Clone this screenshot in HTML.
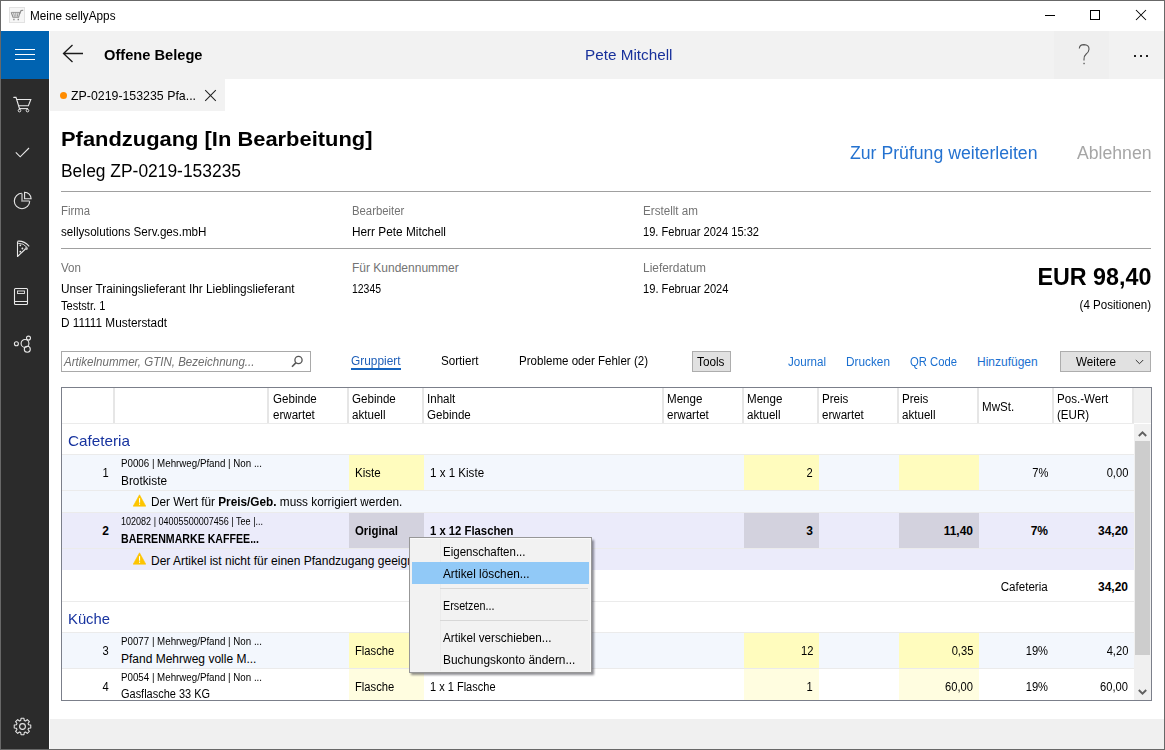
<!DOCTYPE html>
<html><head><meta charset="utf-8"><style>
html,body{margin:0;padding:0;width:1165px;height:750px;overflow:hidden;background:#fff;}
body{position:relative;font-family:"Liberation Sans",sans-serif;}
.a{position:absolute;display:block;}
.t{position:absolute;white-space:nowrap;}
</style></head><body>
<div class="a" style="left:0px;top:0px;width:1165px;height:750px;background:#fff;"></div>
<svg class="a" style="left:9px;top:7px;" width="16" height="16" viewBox="0 0 16 16"><rect x="0.5" y="0.5" width="15" height="15" fill="#f6f6f6" stroke="#e2e2e2"/><path d="M2.2 5.2 L4 10.3 L9.6 10.3 L11 5.2" fill="none" stroke="#8c8c8c" stroke-width="1.1"/><path d="M2.4 5.4 L11 5.4" stroke="#9a9a9a" stroke-width="1"/><path d="M4.6 5.5 L5.4 9.6 M6.8 5.5 L6.9 9.6 M9 5.5 L8.4 9.6" stroke="#8c8c8c" stroke-width="0.9"/><path d="M10.6 7 L12 3.6 L14.2 3.2" fill="none" stroke="#8c8c8c" stroke-width="1.1"/><path d="M4.2 12.5 L5.6 12.5 M8.6 12.5 L10 12.5" stroke="#8c8c8c" stroke-width="1.4"/></svg>
<div class="t" style="top:10px;font-size:12px;line-height:12px;color:#000;left:30px;transform:scaleX(0.9786);transform-origin:0 0;">Meine sellyApps</div>
<div class="a" style="left:1045px;top:15px;width:10px;height:1px;background:#000;"></div>
<div class="a" style="left:1090px;top:10px;width:10px;height:10px;border:1px solid #000;box-sizing:border-box;"></div>
<svg class="a" style="left:1135px;top:9px;" width="12" height="12" viewBox="0 0 12 12"><path d="M1 1 L11 11 M11 1 L1 11" stroke="#000" stroke-width="1.05"/></svg>
<div class="a" style="left:1px;top:31px;width:48px;height:718px;background:#2b2b2b;"></div>
<div class="a" style="left:1px;top:31px;width:48px;height:48px;background:#0063b1;"></div>
<div class="a" style="left:15px;top:49px;width:20px;height:1px;background:#fff;"></div>
<div class="a" style="left:15px;top:54px;width:20px;height:1px;background:#fff;"></div>
<div class="a" style="left:15px;top:59px;width:20px;height:1px;background:#fff;"></div>
<svg class="a" style="left:13px;top:96px;" width="20" height="18" viewBox="0 0 20 18"><path d="M0.8 1.4 L3 1.4 L6.6 13" fill="none" stroke="#e8e8e8" stroke-width="1.1" stroke-linecap="round"/><path d="M3.8 3.5 L17.8 3.5 L15.4 9.8 L5.6 9.8" fill="none" stroke="#e8e8e8" stroke-width="1.1"/><path d="M6.4 12.6 L15 12.6" stroke="#e8e8e8" stroke-width="1.1"/><circle cx="6.5" cy="14.6" r="1.3" fill="none" stroke="#e8e8e8" stroke-width="1"/><circle cx="14.5" cy="14.6" r="1.3" fill="none" stroke="#e8e8e8" stroke-width="1"/></svg>
<svg class="a" style="left:14px;top:146px;" width="18" height="14" viewBox="0 0 18 14"><path d="M1.8 6.3 L6.2 10.8 L15 2" fill="none" stroke="#e8e8e8" stroke-width="1.1"/></svg>
<svg class="a" style="left:13px;top:191px;" width="20" height="20" viewBox="0 0 20 20"><path d="M9 2.3 A7.7 7.7 0 1 0 16.7 10" fill="none" stroke="#e8e8e8" stroke-width="1.1"/><path d="M9 2.5 L9 10 L16.5 10" fill="none" stroke="#a8a8a8" stroke-width="1.6"/><path d="M11.6 1.2 L11.6 7.7 L18.1 7.7 A6.5 6.5 0 0 0 11.6 1.2 Z" fill="none" stroke="#e8e8e8" stroke-width="1.1"/></svg>
<svg class="a" style="left:13px;top:238px;" width="20" height="22" viewBox="0 0 20 22"><path d="M4.5 3.5 L4.5 18.5 L13.5 10" fill="none" stroke="#e8e8e8" stroke-width="1.1" stroke-linejoin="round"/><path d="M4.5 3.2 Q11 2.5 16.2 8.4" fill="none" stroke="#e8e8e8" stroke-width="1.1"/><path d="M5 5.2 Q10.5 5 14.3 9.6" fill="none" stroke="#e8e8e8" stroke-width="0.9"/><circle cx="13.3" cy="10.6" r="1.5" fill="#bbb"/><circle cx="7.3" cy="7.3" r="0.9" fill="#e8e8e8"/><circle cx="9.4" cy="10.5" r="0.9" fill="#e8e8e8"/><circle cx="7.3" cy="13.7" r="0.9" fill="#e8e8e8"/></svg>
<svg class="a" style="left:13px;top:287px;" width="17" height="20" viewBox="0 0 17 20"><rect x="1.5" y="1.5" width="13" height="16" rx="1" fill="none" stroke="#e8e8e8" stroke-width="1.1"/><path d="M1.5 14.5 L14.5 14.5" stroke="#e8e8e8"/><rect x="4.5" y="4" width="7" height="2.5" fill="none" stroke="#e8e8e8" stroke-width="0.9"/></svg>
<svg class="a" style="left:13px;top:335px;" width="20" height="20" viewBox="0 0 20 20"><circle cx="3.4" cy="8.7" r="2" fill="none" stroke="#e8e8e8" stroke-width="1.1"/><circle cx="12" cy="8.4" r="3.9" fill="none" stroke="#e8e8e8" stroke-width="1.1"/><circle cx="15.5" cy="3.1" r="2" fill="none" stroke="#e8e8e8" stroke-width="1.1"/><circle cx="14.3" cy="14.2" r="3" fill="none" stroke="#e8e8e8" stroke-width="1.1"/></svg>
<svg class="a" style="left:13px;top:717px;" width="19" height="19" viewBox="0 0 19 19"><polygon points="7.76,3.44 8.04,1.23 10.96,1.23 11.24,3.44 12.55,3.99 14.32,2.62 16.38,4.68 15.01,6.45 15.56,7.76 17.77,8.04 17.77,10.96 15.56,11.24 15.01,12.55 16.38,14.32 14.32,16.38 12.55,15.01 11.24,15.56 10.96,17.77 8.04,17.77 7.76,15.56 6.45,15.01 4.68,16.38 2.62,14.32 3.99,12.55 3.44,11.24 1.23,10.96 1.23,8.04 3.44,7.76 3.99,6.45 2.62,4.68 4.68,2.62 6.45,3.99" fill="none" stroke="#e8e8e8" stroke-width="1.05" stroke-linejoin="round"/><circle cx="9.5" cy="9.5" r="2.9" fill="none" stroke="#e8e8e8" stroke-width="1.1"/></svg>
<div class="a" style="left:0;top:0;width:1165px;height:750px;box-sizing:border-box;border:1px solid #686868;"></div>
<div class="a" style="left:50px;top:31px;width:1114px;height:48px;background:#f2f2f2;"></div>
<div class="a" style="left:1054px;top:31px;width:55px;height:48px;background:#efefef;"></div>
<svg class="a" style="left:62px;top:44px;" width="22" height="20" viewBox="0 0 22 20"><path d="M10.5 1 L1.5 9.5 L10.5 18 M1.5 9.5 L21 9.5" fill="none" stroke="#1a1a1a" stroke-width="1.3"/></svg>
<div class="t" style="top:47px;font-size:15px;line-height:15px;color:#000;font-weight:bold;left:104px;transform:scaleX(0.9766);transform-origin:0 0;">Offene Belege</div>
<div class="t" style="top:47px;font-size:15px;line-height:15px;color:#17309b;left:585px;transform:scaleX(1.0190);transform-origin:0 0;">Pete Mitchell</div>
<svg class="a" style="left:1077px;top:43px;" width="15" height="23" viewBox="0 0 15 23"><path d="M2.3 5.5 Q2.5 1.6 7 1.6 Q12.2 1.8 12 6.2 Q11.8 9 9.2 11 Q7 12.8 7 16.2 L7 17.6" fill="none" stroke="#555" stroke-width="1.1"/><rect x="6.4" y="19.8" width="1.3" height="1.4" fill="#555"/></svg>
<div class="a" style="left:1134px;top:55px;width:2px;height:2px;background:#222;"></div>
<div class="a" style="left:1140px;top:55px;width:2px;height:2px;background:#222;"></div>
<div class="a" style="left:1146px;top:55px;width:2px;height:2px;background:#222;"></div>
<div class="a" style="left:50px;top:79px;width:175px;height:32px;background:#f2f2f2;"></div>
<svg class="a" style="left:59px;top:91px;" width="9" height="9" viewBox="0 0 9 9"><circle cx="4.5" cy="4.5" r="3.5" fill="#ff8c00"/></svg>
<div class="t" style="top:89px;font-size:13px;line-height:13px;color:#000;left:71px;transform:scaleX(0.9504);transform-origin:0 0;">ZP-0219-153235 Pfa...</div>
<svg class="a" style="left:204px;top:89px;" width="13" height="13" viewBox="0 0 13 13"><path d="M1.2 1.2 L11.8 11.8 M11.8 1.2 L1.2 11.8" stroke="#222" stroke-width="1.05"/></svg>
<div class="t" style="top:129px;font-size:20px;line-height:20px;color:#000;font-weight:bold;left:61px;transform:scaleX(1.0951);transform-origin:0 0;">Pfandzugang [In Bearbeitung]</div>
<div class="t" style="top:162px;font-size:18px;line-height:18px;color:#000;left:61px;transform:scaleX(0.9670);transform-origin:0 0;">Beleg ZP-0219-153235</div>
<div class="t" style="top:144px;font-size:18px;line-height:18px;color:#2472d0;left:850px;transform:scaleX(0.9812);transform-origin:0 0;">Zur Prüfung weiterleiten</div>
<div class="t" style="top:144px;font-size:18px;line-height:18px;color:#a6a6a6;left:1077px;transform:scaleX(0.9794);transform-origin:0 0;">Ablehnen</div>
<div class="a" style="left:61px;top:191px;width:1090px;height:1px;background:#a0a0a0;"></div>
<div class="t" style="top:205px;font-size:12px;line-height:12px;color:#737373;left:61px;transform:scaleX(0.9458);transform-origin:0 0;">Firma</div>
<div class="t" style="top:205px;font-size:12px;line-height:12px;color:#737373;left:352px;transform:scaleX(0.9446);transform-origin:0 0;">Bearbeiter</div>
<div class="t" style="top:205px;font-size:12px;line-height:12px;color:#737373;left:643px;transform:scaleX(0.9704);transform-origin:0 0;">Erstellt am</div>
<div class="t" style="top:226px;font-size:12px;line-height:12px;color:#000;left:61px;transform:scaleX(0.9711);transform-origin:0 0;">sellysolutions Serv.ges.mbH</div>
<div class="t" style="top:226px;font-size:12px;line-height:12px;color:#000;left:352px;transform:scaleX(0.9857);transform-origin:0 0;">Herr Pete Mitchell</div>
<div class="t" style="top:226px;font-size:12px;line-height:12px;color:#000;left:643px;transform:scaleX(0.9249);transform-origin:0 0;">19. Februar 2024 15:32</div>
<div class="a" style="left:61px;top:248px;width:1090px;height:1px;background:#a0a0a0;"></div>
<div class="t" style="top:262px;font-size:12px;line-height:12px;color:#737373;left:61px;transform:scaleX(0.9650);transform-origin:0 0;">Von</div>
<div class="t" style="top:262px;font-size:12px;line-height:12px;color:#737373;left:352px;">Für Kundennummer</div>
<div class="t" style="top:262px;font-size:12px;line-height:12px;color:#737373;left:643px;transform:scaleX(0.9942);transform-origin:0 0;">Lieferdatum</div>
<div class="t" style="top:283px;font-size:12px;line-height:12px;color:#000;left:61px;transform:scaleX(0.9834);transform-origin:0 0;">Unser Trainingslieferant Ihr Lieblingslieferant</div>
<div class="t" style="top:300px;font-size:12px;line-height:12px;color:#000;left:61px;transform:scaleX(0.9226);transform-origin:0 0;">Teststr. 1</div>
<div class="t" style="top:317px;font-size:12px;line-height:12px;color:#000;left:61px;transform:scaleX(0.9830);transform-origin:0 0;">D 11111 Musterstadt</div>
<div class="t" style="top:283px;font-size:12px;line-height:12px;color:#000;left:352px;transform:scaleX(0.8691);transform-origin:0 0;">12345</div>
<div class="t" style="top:283px;font-size:12px;line-height:12px;color:#000;left:643px;transform:scaleX(0.9287);transform-origin:0 0;">19. Februar 2024</div>
<div class="t" style="top:265px;font-size:24px;line-height:24px;color:#000;font-weight:bold;right:14px;transform:scaleX(0.9710);transform-origin:100% 0;">EUR 98,40</div>
<div class="t" style="top:299px;font-size:12px;line-height:12px;color:#000;right:14px;transform:scaleX(0.9657);transform-origin:100% 0;">(4 Positionen)</div>
<div class="a" style="left:61px;top:351px;width:250px;height:21px;background:#fff;border:1px solid #a9a9a9;box-sizing:border-box;"></div>
<div class="t" style="top:356px;font-size:12px;line-height:12px;color:#6d6d6d;font-style:italic;left:64px;transform:scaleX(0.9617);transform-origin:0 0;">Artikelnummer, GTIN, Bezeichnung...</div>
<svg class="a" style="left:290px;top:355px;" width="14" height="14" viewBox="0 0 14 14"><circle cx="8.5" cy="5" r="3.6" fill="none" stroke="#555" stroke-width="1.3"/><path d="M6 7.6 L2 11.8" stroke="#555" stroke-width="1.6"/></svg>
<div class="t" style="top:355px;font-size:12px;line-height:12px;color:#1f5fb8;left:351px;transform:scaleX(0.9896);transform-origin:0 0;">Gruppiert</div>
<div class="a" style="left:351px;top:368px;width:50px;height:2px;background:#1464c0;"></div>
<div class="t" style="top:355px;font-size:12px;line-height:12px;color:#000;left:441px;transform:scaleX(0.9695);transform-origin:0 0;">Sortiert</div>
<div class="t" style="top:355px;font-size:12px;line-height:12px;color:#000;left:519px;transform:scaleX(0.9623);transform-origin:0 0;">Probleme oder Fehler (2)</div>
<div class="a" style="left:692px;top:351px;width:39px;height:21px;background:#e1e1e1;border:1px solid #adadad;box-sizing:border-box;"></div>
<div class="t" style="top:356px;font-size:12px;line-height:12px;color:#000;left:697px;transform:scaleX(0.9817);transform-origin:0 0;">Tools</div>
<div class="t" style="top:356px;font-size:12px;line-height:12px;color:#1a6fd0;left:788px;transform:scaleX(0.9655);transform-origin:0 0;">Journal</div>
<div class="t" style="top:356px;font-size:12px;line-height:12px;color:#1a6fd0;left:846px;transform:scaleX(0.9847);transform-origin:0 0;">Drucken</div>
<div class="t" style="top:356px;font-size:12px;line-height:12px;color:#1a6fd0;left:910px;transform:scaleX(0.9396);transform-origin:0 0;">QR Code</div>
<div class="t" style="top:356px;font-size:12px;line-height:12px;color:#1a6fd0;left:977px;">Hinzufügen</div>
<div class="a" style="left:1060px;top:351px;width:91px;height:21px;background:#e1e1e1;border:1px solid #adadad;box-sizing:border-box;"></div>
<div class="t" style="top:356px;font-size:12px;line-height:12px;color:#000;left:1076px;transform:scaleX(0.9726);transform-origin:0 0;">Weitere</div>
<svg class="a" style="left:1135px;top:359px;" width="10" height="7" viewBox="0 0 10 7"><path d="M0.8 1 L4.5 4.7 L8.2 1" fill="none" stroke="#333" stroke-width="1"/></svg>
<div class="a" style="left:62px;top:388px;width:1089px;height:312px;background:#fff;"></div>
<div class="a" style="left:1134px;top:388px;width:17px;height:35px;background:#f0f0f0;"></div>
<div class="a" style="left:113px;top:388px;width:2px;height:35px;background:#e6e6e6;"></div>
<div class="a" style="left:267px;top:388px;width:2px;height:35px;background:#e6e6e6;"></div>
<div class="a" style="left:347px;top:388px;width:2px;height:35px;background:#e6e6e6;"></div>
<div class="a" style="left:422px;top:388px;width:2px;height:35px;background:#e6e6e6;"></div>
<div class="a" style="left:662px;top:388px;width:2px;height:35px;background:#e6e6e6;"></div>
<div class="a" style="left:742px;top:388px;width:2px;height:35px;background:#e6e6e6;"></div>
<div class="a" style="left:817px;top:388px;width:2px;height:35px;background:#e6e6e6;"></div>
<div class="a" style="left:897px;top:388px;width:2px;height:35px;background:#e6e6e6;"></div>
<div class="a" style="left:977px;top:388px;width:2px;height:35px;background:#e6e6e6;"></div>
<div class="a" style="left:1052px;top:388px;width:2px;height:35px;background:#e6e6e6;"></div>
<div class="a" style="left:1132px;top:388px;width:2px;height:35px;background:#e6e6e6;"></div>
<div class="a" style="left:62px;top:423px;width:1072px;height:1px;background:#ebebeb;"></div>
<div class="t" style="top:393px;font-size:12px;line-height:12px;color:#000;left:273px;transform:scaleX(0.9650);transform-origin:0 0;">Gebinde</div>
<div class="t" style="top:409px;font-size:12px;line-height:12px;color:#000;left:273px;transform:scaleX(0.9650);transform-origin:0 0;">erwartet</div>
<div class="t" style="top:393px;font-size:12px;line-height:12px;color:#000;left:352px;transform:scaleX(0.9650);transform-origin:0 0;">Gebinde</div>
<div class="t" style="top:409px;font-size:12px;line-height:12px;color:#000;left:352px;transform:scaleX(0.9650);transform-origin:0 0;">aktuell</div>
<div class="t" style="top:393px;font-size:12px;line-height:12px;color:#000;left:427px;transform:scaleX(0.9650);transform-origin:0 0;">Inhalt</div>
<div class="t" style="top:409px;font-size:12px;line-height:12px;color:#000;left:427px;transform:scaleX(0.9650);transform-origin:0 0;">Gebinde</div>
<div class="t" style="top:393px;font-size:12px;line-height:12px;color:#000;left:667px;transform:scaleX(0.9650);transform-origin:0 0;">Menge</div>
<div class="t" style="top:409px;font-size:12px;line-height:12px;color:#000;left:667px;transform:scaleX(0.9650);transform-origin:0 0;">erwartet</div>
<div class="t" style="top:393px;font-size:12px;line-height:12px;color:#000;left:747px;transform:scaleX(0.9650);transform-origin:0 0;">Menge</div>
<div class="t" style="top:409px;font-size:12px;line-height:12px;color:#000;left:747px;transform:scaleX(0.9650);transform-origin:0 0;">aktuell</div>
<div class="t" style="top:393px;font-size:12px;line-height:12px;color:#000;left:822px;transform:scaleX(0.9650);transform-origin:0 0;">Preis</div>
<div class="t" style="top:409px;font-size:12px;line-height:12px;color:#000;left:822px;transform:scaleX(0.9650);transform-origin:0 0;">erwartet</div>
<div class="t" style="top:393px;font-size:12px;line-height:12px;color:#000;left:902px;transform:scaleX(0.9650);transform-origin:0 0;">Preis</div>
<div class="t" style="top:409px;font-size:12px;line-height:12px;color:#000;left:902px;transform:scaleX(0.9650);transform-origin:0 0;">aktuell</div>
<div class="t" style="top:401px;font-size:12px;line-height:12px;color:#000;left:982px;transform:scaleX(0.9650);transform-origin:0 0;">MwSt.</div>
<div class="t" style="top:393px;font-size:12px;line-height:12px;color:#000;left:1057px;transform:scaleX(0.9650);transform-origin:0 0;">Pos.-Wert</div>
<div class="t" style="top:409px;font-size:12px;line-height:12px;color:#000;left:1057px;transform:scaleX(0.9650);transform-origin:0 0;">(EUR)</div>
<div class="a" style="left:1134px;top:424px;width:17px;height:276px;background:#f0f0f0;"></div>
<div class="a" style="left:1135px;top:441px;width:15px;height:214px;background:#cdcdcd;"></div>
<svg class="a" style="left:1137px;top:430px;" width="11" height="8" viewBox="0 0 11 8"><path d="M1.8 6 L5.5 2.3 L9.2 6" fill="none" stroke="#606060" stroke-width="1.9"/></svg>
<svg class="a" style="left:1137px;top:688px;" width="11" height="8" viewBox="0 0 11 8"><path d="M1.8 2 L5.5 5.7 L9.2 2" fill="none" stroke="#606060" stroke-width="1.9"/></svg>
<div class="t" style="top:433px;font-size:15px;line-height:15px;color:#17339f;left:68px;transform:scaleX(1.0187);transform-origin:0 0;">Cafeteria</div>
<div class="a" style="left:62px;top:454px;width:1072px;height:1px;background:#ebebeb;"></div>
<div class="a" style="left:62px;top:455px;width:1072px;height:35px;background:#f3f7fd;"></div>
<div class="a" style="left:349px;top:455px;width:75px;height:35px;background:#fffcbe;"></div>
<div class="a" style="left:744px;top:455px;width:75px;height:35px;background:#fffcbe;"></div>
<div class="a" style="left:899px;top:455px;width:80px;height:35px;background:#fffcbe;"></div>
<div class="a" style="left:62px;top:490px;width:1072px;height:1px;background:#ebebeb;"></div>
<div class="a" style="left:62px;top:491px;width:1072px;height:21px;background:#f3f7fd;"></div>
<div class="a" style="left:62px;top:512px;width:1072px;height:1px;background:#ebebeb;"></div>
<div class="t" style="top:467px;font-size:12px;line-height:12px;color:#000;right:1056px;transform:scaleX(0.9300);transform-origin:100% 0;">1</div>
<div class="t" style="top:459px;font-size:10px;line-height:10px;color:#000;left:121px;transform:scaleX(0.9743);transform-origin:0 0;">P0006 | Mehrweg/Pfand | Non ...</div>
<div class="t" style="top:475px;font-size:12px;line-height:12px;color:#000;left:121px;transform:scaleX(0.9854);transform-origin:0 0;">Brotkiste</div>
<div class="t" style="top:467px;font-size:12px;line-height:12px;color:#000;left:355px;transform:scaleX(0.9650);transform-origin:0 0;">Kiste</div>
<div class="t" style="top:467px;font-size:12px;line-height:12px;color:#000;left:430px;transform:scaleX(0.9650);transform-origin:0 0;">1 x 1 Kiste</div>
<div class="t" style="top:467px;font-size:12px;line-height:12px;color:#000;right:352px;transform:scaleX(0.9300);transform-origin:100% 0;">2</div>
<div class="t" style="top:467px;font-size:12px;line-height:12px;color:#000;right:117px;transform:scaleX(0.9300);transform-origin:100% 0;">7%</div>
<div class="t" style="top:467px;font-size:12px;line-height:12px;color:#000;right:37px;transform:scaleX(0.9300);transform-origin:100% 0;">0,00</div>
<svg class="a" style="left:133px;top:494px;" width="13" height="13" viewBox="0 0 13 13"><path d="M6.5 0.8 L12.8 12.2 L0.2 12.2 Z" fill="#fdc500" stroke="#fdc500" stroke-width="0.6" stroke-linejoin="round"/><rect x="6" y="4.2" width="1.1" height="4.5" fill="#fff"/><rect x="6" y="9.6" width="1.1" height="1.2" fill="#fff"/></svg>
<div class="t" style="left:151px;top:496px;font-size:12px;line-height:12px;transform:scaleX(0.982);transform-origin:0 0;">Der Wert für <b>Preis/Geb.</b> muss korrigiert werden.</div>
<div class="a" style="left:62px;top:513px;width:1072px;height:35px;background:#ebebfa;"></div>
<div class="a" style="left:349px;top:513px;width:75px;height:35px;background:#d3d2de;"></div>
<div class="a" style="left:744px;top:513px;width:75px;height:35px;background:#d3d2de;"></div>
<div class="a" style="left:899px;top:513px;width:80px;height:35px;background:#d3d2de;"></div>
<div class="a" style="left:62px;top:548px;width:1072px;height:1px;background:#ebebeb;"></div>
<div class="a" style="left:62px;top:549px;width:1072px;height:21px;background:#ebebfa;"></div>
<div class="t" style="top:525px;font-size:12px;line-height:12px;color:#000;font-weight:bold;right:1056px;">2</div>
<div class="t" style="top:517px;font-size:10px;line-height:10px;color:#000;left:121px;transform:scaleX(0.9034);transform-origin:0 0;">102082 | 04005500007456 | Tee |...</div>
<div class="t" style="top:533px;font-size:12px;line-height:12px;color:#000;font-weight:bold;left:121px;transform:scaleX(0.8846);transform-origin:0 0;">BAERENMARKE KAFFEE...</div>
<div class="t" style="top:525px;font-size:12px;line-height:12px;color:#000;font-weight:bold;left:355px;transform:scaleX(0.9484);transform-origin:0 0;">Original</div>
<div class="t" style="top:525px;font-size:12px;line-height:12px;color:#000;font-weight:bold;left:430px;transform:scaleX(0.9412);transform-origin:0 0;">1 x 12 Flaschen</div>
<div class="t" style="top:525px;font-size:12px;line-height:12px;color:#000;font-weight:bold;right:352px;">3</div>
<div class="t" style="top:525px;font-size:12px;line-height:12px;color:#000;font-weight:bold;right:192px;">11,40</div>
<div class="t" style="top:525px;font-size:12px;line-height:12px;color:#000;font-weight:bold;right:117px;">7%</div>
<div class="t" style="top:525px;font-size:12px;line-height:12px;color:#000;font-weight:bold;right:37px;">34,20</div>
<svg class="a" style="left:133px;top:552px;" width="13" height="13" viewBox="0 0 13 13"><path d="M6.5 0.8 L12.8 12.2 L0.2 12.2 Z" fill="#fdc500" stroke="#fdc500" stroke-width="0.6" stroke-linejoin="round"/><rect x="6" y="4.2" width="1.1" height="4.5" fill="#fff"/><rect x="6" y="9.6" width="1.1" height="1.2" fill="#fff"/></svg>
<div class="t" style="top:555px;font-size:12px;line-height:12px;color:#000;left:151px;">Der Artikel ist nicht für einen Pfandzugang geeignet.</div>
<div class="t" style="top:581px;font-size:12px;line-height:12px;color:#000;right:117px;transform:scaleX(0.9650);transform-origin:100% 0;">Cafeteria</div>
<div class="t" style="top:581px;font-size:12px;line-height:12px;color:#000;font-weight:bold;right:37px;">34,20</div>
<div class="a" style="left:62px;top:601px;width:1072px;height:1px;background:#ebebeb;"></div>
<div class="t" style="top:611px;font-size:15px;line-height:15px;color:#17339f;left:68px;transform:scaleX(0.9875);transform-origin:0 0;">Küche</div>
<div class="a" style="left:62px;top:632px;width:1072px;height:1px;background:#ebebeb;"></div>
<div class="a" style="left:62px;top:633px;width:1072px;height:35px;background:#f3f7fd;"></div>
<div class="a" style="left:349px;top:633px;width:75px;height:35px;background:#fffcbe;"></div>
<div class="a" style="left:744px;top:633px;width:75px;height:35px;background:#fffcbe;"></div>
<div class="a" style="left:899px;top:633px;width:80px;height:35px;background:#fffcbe;"></div>
<div class="a" style="left:62px;top:668px;width:1072px;height:1px;background:#ebebeb;"></div>
<div class="t" style="top:645px;font-size:12px;line-height:12px;color:#000;right:1056px;transform:scaleX(0.9300);transform-origin:100% 0;">3</div>
<div class="t" style="top:637px;font-size:10px;line-height:10px;color:#000;left:121px;transform:scaleX(0.9743);transform-origin:0 0;">P0077 | Mehrweg/Pfand | Non ...</div>
<div class="t" style="top:653px;font-size:12px;line-height:12px;color:#000;left:121px;">Pfand Mehrweg volle M...</div>
<div class="t" style="top:645px;font-size:12px;line-height:12px;color:#000;left:355px;transform:scaleX(0.9354);transform-origin:0 0;">Flasche</div>
<div class="t" style="top:645px;font-size:12px;line-height:12px;color:#000;left:430px;transform:scaleX(0.9650);transform-origin:0 0;">1 x 1 Flasche</div>
<div class="t" style="top:645px;font-size:12px;line-height:12px;color:#000;right:352px;transform:scaleX(0.9300);transform-origin:100% 0;">12</div>
<div class="t" style="top:645px;font-size:12px;line-height:12px;color:#000;right:192px;transform:scaleX(0.9300);transform-origin:100% 0;">0,35</div>
<div class="t" style="top:645px;font-size:12px;line-height:12px;color:#000;right:117px;transform:scaleX(0.9300);transform-origin:100% 0;">19%</div>
<div class="t" style="top:645px;font-size:12px;line-height:12px;color:#000;right:37px;transform:scaleX(0.9300);transform-origin:100% 0;">4,20</div>
<div class="a" style="left:349px;top:669px;width:75px;height:31px;background:#fffde0;"></div>
<div class="a" style="left:744px;top:669px;width:75px;height:31px;background:#fffde0;"></div>
<div class="a" style="left:899px;top:669px;width:80px;height:31px;background:#fffde0;"></div>
<div class="t" style="top:681px;font-size:12px;line-height:12px;color:#000;right:1056px;transform:scaleX(0.9300);transform-origin:100% 0;">4</div>
<div class="t" style="top:673px;font-size:10px;line-height:10px;color:#000;left:121px;transform:scaleX(0.9743);transform-origin:0 0;">P0054 | Mehrweg/Pfand | Non ...</div>
<div class="t" style="top:688px;font-size:12px;line-height:12px;color:#000;left:121px;transform:scaleX(0.9139);transform-origin:0 0;">Gasflasche 33 KG</div>
<div class="t" style="top:681px;font-size:12px;line-height:12px;color:#000;left:355px;transform:scaleX(0.9354);transform-origin:0 0;">Flasche</div>
<div class="t" style="top:681px;font-size:12px;line-height:12px;color:#000;left:430px;transform:scaleX(0.9178);transform-origin:0 0;">1 x 1 Flasche</div>
<div class="t" style="top:681px;font-size:12px;line-height:12px;color:#000;right:352px;transform:scaleX(0.9300);transform-origin:100% 0;">1</div>
<div class="t" style="top:681px;font-size:12px;line-height:12px;color:#000;right:192px;transform:scaleX(0.9300);transform-origin:100% 0;">60,00</div>
<div class="t" style="top:681px;font-size:12px;line-height:12px;color:#000;right:117px;transform:scaleX(0.9300);transform-origin:100% 0;">19%</div>
<div class="t" style="top:681px;font-size:12px;line-height:12px;color:#000;right:37px;transform:scaleX(0.9300);transform-origin:100% 0;">60,00</div>
<div class="a" style="left:61px;top:387px;width:1091px;height:314px;box-sizing:border-box;border:1px solid #7b7f8a;"></div>
<div class="a" style="left:50px;top:719px;width:1114px;height:30px;background:#f0f0f0;"></div>
<div class="a" style="left:411px;top:540px;width:183px;height:135px;background:rgba(50,50,60,0.55);filter:blur(1.2px);"></div>
<div class="a" style="left:409px;top:537px;width:183px;height:136px;background:#f2f2f2;border:1px solid #979797;box-sizing:border-box;"></div>
<div class="a" style="left:410px;top:538px;width:181px;height:1px;background:#fafafa;"></div>
<div class="a" style="left:590px;top:538px;width:1px;height:134px;background:#fafafa;"></div>
<div class="a" style="left:440px;top:539px;width:1px;height:132px;background:#ebebeb;"></div>
<div class="a" style="left:412px;top:562px;width:177px;height:22px;background:#91c9f7;"></div>
<div class="t" style="top:546px;font-size:12px;line-height:12px;color:#000;left:443px;transform:scaleX(0.9587);transform-origin:0 0;">Eigenschaften...</div>
<div class="t" style="top:568px;font-size:12px;line-height:12px;color:#000;left:443px;transform:scaleX(0.9837);transform-origin:0 0;">Artikel löschen...</div>
<div class="t" style="top:600px;font-size:12px;line-height:12px;color:#000;left:443px;transform:scaleX(0.8961);transform-origin:0 0;">Ersetzen...</div>
<div class="t" style="top:632px;font-size:12px;line-height:12px;color:#000;left:443px;transform:scaleX(0.9741);transform-origin:0 0;">Artikel verschieben...</div>
<div class="t" style="top:654px;font-size:12px;line-height:12px;color:#000;left:443px;transform:scaleX(0.9923);transform-origin:0 0;">Buchungskonto ändern...</div>
<div class="a" style="left:440px;top:588px;width:148px;height:1px;background:#d7d7d7;"></div>
<div class="a" style="left:440px;top:620px;width:148px;height:1px;background:#d7d7d7;"></div>
</body></html>
